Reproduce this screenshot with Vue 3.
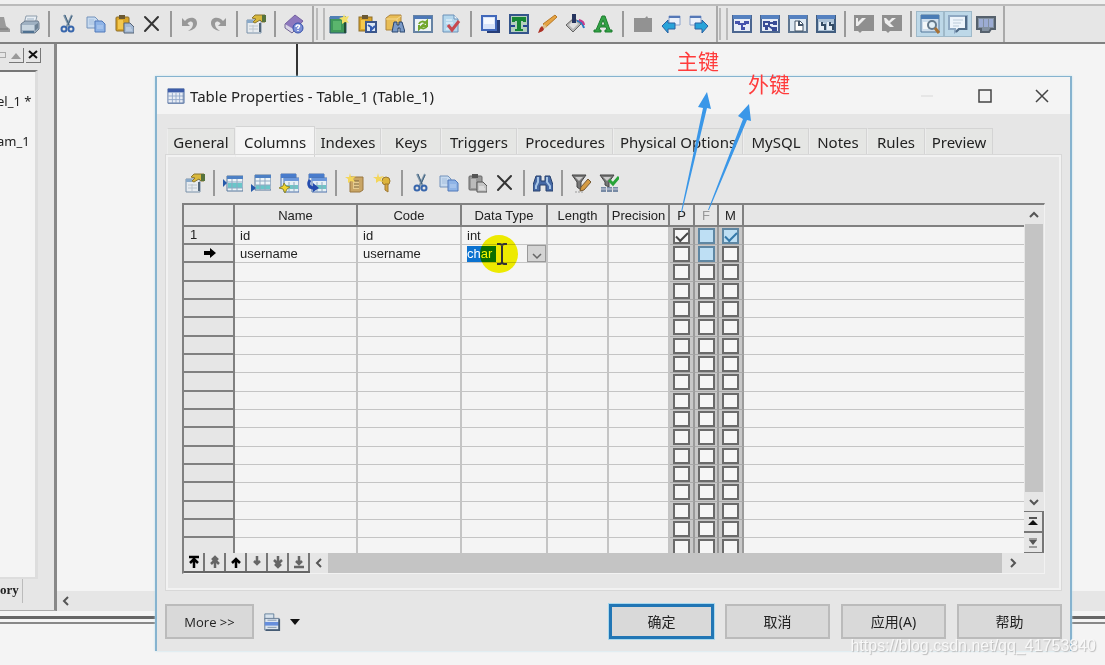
<script setup>
import { ref } from 'vue'

const icons = {
  person: '<path d="M3 3h9l2 9 4 3v3H1V9z" fill="#9a9a9a"/><path d="M4 15h12" stroke="#777"/>',
  printer: '<path d="M6 2h11l-2 8H4z" fill="#e8eef4" stroke="#8e9dab"/><path d="M1 10l4-3h13l1 2v6l-4 4H1z" fill="#9fb1c2" stroke="#6c7d8e"/><path d="M2 11h12v5H2z" fill="#c9d6e0"/><path d="M7 5h7" stroke="#9fb3c5"/><path d="M3 18h11" stroke="#4f7191" stroke-width="2"/><path d="M15 11l3-2v5l-3 3z" fill="#6d8193"/>',
  cut: '<path d="M6 1l6 13M14 1L8 14" stroke="#8298ab" stroke-width="2"/><path d="M7 1l4 10M14 2l-4 9" stroke="#40617f"/><circle cx="6" cy="15" r="2.5" fill="none" stroke="#3866ac" stroke-width="2"/><circle cx="13" cy="15" r="2.5" fill="none" stroke="#3866ac" stroke-width="2"/>',
  copy: '<path d="M1 3h8l3 3v8H1z" fill="#c7daef" stroke="#7593bc"/><path d="M3 6h5M3 8h6M3 10h6" stroke="#a5bedd"/><path d="M9 7h7l3 3v8H9z" fill="#8eb3e6" stroke="#5078b9"/><path d="M11 12h6M11 14h6" stroke="#b9d1f2"/>',
  paste: '<rect x="2" y="3" width="13" height="14" rx="1" fill="#d9a52a" stroke="#8d6d27"/><rect x="5" y="1" width="6" height="4" fill="#6b5933"/><path d="M4 6h5v9H4z" fill="#f3c84e"/><path d="M10 9h6l4 4v6H10z" fill="#a4b9d4" stroke="#576477"/><path d="M12 14h5M12 16h6" stroke="#d0ddec"/>',
  pasteGray: '<rect x="2" y="3" width="13" height="14" rx="1" fill="#999" stroke="#666"/><rect x="5" y="1" width="6" height="4" fill="#555"/><path d="M4 6h5v9H4z" fill="#bbb"/><path d="M10 9h6l4 4v6H10z" fill="#c4c4c4" stroke="#555"/><path d="M12 14h5M12 16h6" stroke="#eee"/>',
  remove: '<path d="M3 3l13 13M16 3L3 17" fill="none" stroke="#353535" stroke-width="2" stroke-linecap="round"/>',
  undo: '<path d="M2 4v8h8L7.500 9.500C10 6.500 13 7 13 10c0 3-2 5-5 7 6-1 9-4 9-8 0-6-8-7-12-2z" fill="#989898"/>',
  redo: '<path d="M18 4v8h-8l2.500-2.500C10 6.500 7 7 7 10c0 3 2 5 5 7-6-1-9-4-9-8 0-6 8-7 12-2z" fill="#989898"/>',
  properties: '<path d="M1 6h14v13H1z" fill="#e7ebef" stroke="#7890a8"/><path d="M1 6h6v3H1z" fill="#89a9c9"/><path d="M3 12h9M3 15h9M7 11v7" stroke="#bcc6cf"/><path d="M6 4l3-3h10v7h-3l-2-2-5 3-2-1 3-3z" fill="#d9b83c" stroke="#8a7730"/><path d="M16 1h4v7h-4z" fill="#56733d"/><path d="M14 9v9" stroke="#54687c" stroke-width="2"/>',
  help: '<path d="M1 10L11 1l8 6-9 10z" fill="#8d78be" stroke="#7562a0"/><path d="M1 10v4l7 5 3-3" fill="#d9d5e6" stroke="#716595"/><circle cx="14" cy="14" r="5" fill="#7b8fd6" stroke="#334eaa"/><path d="M12 13c0-3 5-2 3 0l-1 1v1m0 1v1" fill="none" stroke="#fff" stroke-width="1.5"/>',
  newModel: '<path d="M1 3h16v16H1z" fill="#3f9859" stroke="#315a76"/><path d="M1 2h14v3H1z" fill="#507fb6"/><path d="M4 7h8v9H4z" fill="#5bb56d"/><path d="M16 4v15" stroke="#224d37" stroke-width="2"/><path d="M15 0l1 3 4-1-2 4 2 3-4-1-3 2v-4l-3-2 4-1z" fill="#f2df68"/>',
  pasteModel: '<rect x="2" y="3" width="13" height="14" fill="#d9a52a" stroke="#8d6d27"/><path d="M5 1h6v4H5z" fill="#6b5933"/><path d="M4 6h4v9H4z" fill="#f3c84e"/><rect x="9" y="8" width="10" height="10" fill="#dce7f5" stroke="#3b568b" stroke-width="2"/><path d="M11 11l3 2v3l4-4" fill="none" stroke="#315bb2" stroke-width="2"/>',
  findObject: '<path d="M1 4l4-3h11v10l-4 5H1z" fill="#e8bd56" stroke="#ad833c"/><path d="M1 5h11v11M12 5l4-3" fill="none" stroke="#f4d991"/><path d="M9 8h3v3h2V8h3l3 10h-5v-4h-2v4H7z" fill="#7b9bc8" stroke="#29446d"/>',
  refresh: '<path d="M1 2h18v16H1z" fill="#edf3f6" stroke="#6683a4" stroke-width="2"/><path d="M1 2h18v3H1z" fill="#4d78b7"/><path d="M6 10c1-3 5-3 6-1l2-2v5H9l2-2M14 12c-1 3-5 3-6 1l-2 2v-4" fill="none" stroke="#71a72d" stroke-width="2"/>',
  check: '<path d="M2 1h11l4 4v13H2z" fill="#b4d7ed" stroke="#6b91b8"/><path d="M13 1v4h4" fill="#eef7fd" stroke="#6b91b8"/><path d="M5 6h6M5 9h7M5 15h5" stroke="#f0f8ff"/><path d="M7 11l4 5 7-9" fill="none" stroke="#c74950" stroke-width="3"/>',
  shadow: '<path d="M6 6h13v13H6z" fill="#263e79"/><path d="M1 2h14v14H1z" fill="#d8e4fa" stroke="#4168ba" stroke-width="2"/><path d="M3 4h10v6H3z" fill="#f5f9ff"/>',
  textBox: '<path d="M1 1h18v18H1z" fill="#b4d0bd" stroke="#35558c" stroke-width="2"/><path d="M3 3h14v5h-3V7h-2v8h2v2H6v-2h2V7H6v1H3z" fill="#168635"/><path d="M2 12h4M14 12h4" stroke="#244393" stroke-width="2"/>',
  brush: '<path d="M18 1l2 2-11 10-3-3z" fill="#e6a443" stroke="#b67725"/><path d="M7 10l3 3-3 2-2-2z" fill="#ddc18b"/><path d="M5 12l2 3c-1 3-4 3-6 4l2-5z" fill="#ad3125"/>',
  bucket: '<path d="M1 11L9 4l7 6-8 8z" fill="#b6b6b6" stroke="#656565"/><path d="M4 11l5-5 4 4-5 5z" fill="#e0e0e0"/><path d="M8 9V1h2v8" fill="none" stroke="#26345f" stroke-width="2"/><path d="M12 7c5 0 6 4 7 7" fill="none" stroke="#297ac2" stroke-width="2"/><path d="M14 6c4 1 5 3 5 5" fill="none" stroke="#c6398c" stroke-width="2"/>',
  fontColor: '<path fill-rule="evenodd" d="M9 2h3l5 14h2v2h-7v-2h2l-1-3H7l-1 3h2v2H1v-2h2zM10 6l-2 5h4z" fill="#32a345" stroke="#1f7d30"/>',
  folderGray: '<path d="M1 4h11l2-2 1 2h4v14H1z" fill="#929292"/>',
  back: '<path d="M8 2h11v9H8z" fill="#eaf0fa" stroke="#8aa2cc"/><path d="M8 3h11" stroke="#5578b7" stroke-width="2"/><path d="M1 12l6-6v3h7v6H7v4z" fill="#28a3d9" stroke="#2861a2"/>',
  forward: '<path d="M1 2h11v9H1z" fill="#eaf0fa" stroke="#8aa2cc"/><path d="M1 3h11" stroke="#5578b7" stroke-width="2"/><path d="M19 12l-6-6v3H6v6h7v4z" fill="#28a3d9" stroke="#2861a2"/>',
  diagramA: '<path d="M1 2h18v16H1z" fill="#e7edf7" stroke="#4c6690" stroke-width="2"/><path d="M1 1h18v4H1z" fill="#5581c0"/><path d="M4 8h3v2h3v4h2M10 14v-4h3V8h3" fill="none" stroke="#4553ad" stroke-width="2"/><path d="M3 7h4v3H3zM13 7h4v3h-4zM9 13h4v3H9z" fill="#4553ad"/>',
  diagramB: '<path d="M1 2h18v16H1z" fill="#e7edf7" stroke="#4c6690" stroke-width="2"/><path d="M1 1h18v4H1z" fill="#5581c0"/><path d="M4 8h5v4H4zM9 9h4M9 12l4 3" fill="none" stroke="#394c96" stroke-width="2"/><path d="M13 7h4v4h-4zM12 13h5v4h-5zM5 13h3v3H5z" fill="#394c96"/>',
  diagramC: '<path d="M1 2h18v16H1z" fill="#dce7f1" stroke="#5f7690" stroke-width="2"/><path d="M1 1h18v4H1z" fill="#5581c0"/><path d="M7 7h5l3 3v7H7z" fill="#fff" stroke="#425469"/><path d="M11 7v4h4" fill="none" stroke="#425469" stroke-width="2"/>',
  diagramD: '<path d="M1 2h18v16H1z" fill="#aac0d5" stroke="#425e80" stroke-width="2"/><path d="M1 1h18v4H1z" fill="#5581c0"/><path d="M3 8h3l3 2v6H3zM11 8h3l3 2v6h-6z" fill="#e7eff6"/><path d="M6 8v3h3v5M14 8v3h3v5" fill="none" stroke="#344c65" stroke-width="2"/>',
  grayA: '<path d="M0 1h20v16H8l-2 2-2-2H0z" fill="#8f8f8f"/><path d="M2 4h2v4l4-4h4L4 12H2z" fill="#eee"/>',
  grayB: '<path d="M0 1h20v16H8l-2 2-2-2H0z" fill="#8f8f8f"/><path d="M2 4h2l3 3 3-3h4L8 9l4 4H8L3 9z" fill="#eee"/>',
  preview: '<path d="M1 1h18v17H1z" fill="#cedeec" stroke="#54789b"/><path d="M1 1h18v4H1z" fill="#497cb5"/><path d="M3 8h5v7H3z" fill="#f4f7f9"/><circle cx="12" cy="11" r="4" fill="#e2eef5" stroke="#65798b" stroke-width="2"/><path d="M15 14l4 5" stroke="#a87134" stroke-width="3"/>',
  comment: '<path d="M1 2h18v13h-8l-4 3v-3H1z" fill="#edf4fb" stroke="#8fa9c3" stroke-width="2"/><path d="M5 6h10M5 9h8M5 12h6" stroke="#bccbd9"/><path d="M18 2v13h-7l-3 3" fill="none" stroke="#506b87" stroke-width="2"/>',
  columnsView: '<path d="M1 3h18v12h-4l-2 3H5v-3H1z" fill="#8290a0" stroke="#56616d" stroke-width="2"/><path d="M3 5h4v8H3zM8 5h4v8H8zM13 5h4v8h-4z" fill="#9cacd4"/>',
  table: '<path d="M1 2h18v16H1z" fill="#e8edf5" stroke="#5974a5"/><path d="M1 2h18v4H1z" fill="#3e5ca8"/><path d="M1 10h18M1 14h18M6 6v12M10 6v12M14 6v12" stroke="#92a8cb"/><path d="M18 6v12H1" fill="none" stroke="#657fa8"/>',
  insertRow: '<path d="M4 3h16v15H4z" fill="#edf4f8" stroke="#56769b"/><path d="M4 3h16v3H4z" fill="#4d80c4"/><path d="M5 10h14v5H5z" fill="#69c6c9"/><path d="M4 9h16M4 15h16M9 6v12M14 6v12" stroke="#8fa9c2"/><path d="M0 6l4 4-4 4z" fill="#2459aa"/>',
  addRow: '<path d="M4 2h16v15H4z" fill="#edf4f8" stroke="#56769b"/><path d="M4 2h16v3H4z" fill="#4d80c4"/><path d="M5 12h14v4H5z" fill="#69c6c9"/><path d="M4 8h16M4 12h16M9 5v12M14 5v12" stroke="#8fa9c2"/><path d="M0 11l5 4-5 4z" fill="#2459aa"/>',
  addColumns: '<path d="M2 1h15v14H2z" fill="#dbe7f4" stroke="#4e73ac"/><path d="M2 1h15v4H2z" fill="#497ccc"/><path d="M5 5h15v14H5z" fill="#e7f0f5" stroke="#4e73ac"/><path d="M5 5h15v3H5z" fill="#6b97db"/><path d="M6 12h13v4H6z" fill="#70c4c5"/><path d="M10 9v10M15 9v10" stroke="#8fa9c2"/><path d="M5 10l2 3 4 1-3 2-2 4-2-4-4-1 4-2z" fill="#f1d52e" stroke="#8b8734"/>',
  replaceColumns: '<path d="M2 1h15v14H2z" fill="#dbe7f4" stroke="#4e73ac"/><path d="M2 1h15v4H2z" fill="#497ccc"/><path d="M5 5h15v14H5z" fill="#e7f0f5" stroke="#4e73ac"/><path d="M5 5h15v3H5z" fill="#6b97db"/><path d="M6 12h13v4H6z" fill="#70c4c5"/><path d="M10 9v10M15 9v10" stroke="#8fa9c2"/><path d="M3 7c-3 5 0 8 4 8" fill="none" stroke="#244cae" stroke-width="3"/><path d="M6 10v9l6-4z" fill="#244cae"/>',
  index: '<path d="M5 4h13v13l-3 2H5z" fill="#c9a565" stroke="#997640"/><path d="M8 8h6v8H8z" fill="#e6cb8e"/><path d="M9 8h5M9 11h5M9 14h5" stroke="#7b6238"/><path d="M5 0l1 4 5-1-3 3 2 3-4-1-3 2V6L0 4h4z" fill="#f4d65a"/>',
  key: '<circle cx="13" cy="8" r="4" fill="#ddb43b" stroke="#9b7932"/><path d="M12 11h3v8l-3-2z" fill="#d6a640" stroke="#a07a33"/><path d="M5 0l1 4 5-1-3 3 2 3-4-1-3 2V6L0 4h4z" fill="#f4d65a"/>',
  find: '<path d="M3 3h5v5h4V3h5l3 9v6h-7v-6H7v6H0v-6z" fill="#4669a5" stroke="#27416d"/><path d="M5 4v5l-2 4v3M14 4v5l3 4v3" stroke="#a7c5e6" stroke-width="2" fill="none"/>',
  filter: '<path d="M1 2h14L10 9v8l-4-3V9z" fill="#777" stroke="#444"/><path d="M4 4h8l-4 4z" fill="#ccc"/><path d="M17 6l3 3-7 8-4 1 1-4z" fill="#d59b43" stroke="#745832"/><path d="M4 19h9" stroke="#999" stroke-dasharray="2 1"/>',
  filterCheck: '<path d="M1 2h14L10 9v5l-4-2V9z" fill="#777" stroke="#444"/><path d="M4 4h8l-4 4z" fill="#ccc"/><path d="M10 7l4 4 6-7" fill="none" stroke="#28a438" stroke-width="3"/><path d="M2 14h5v5H2zM8 14h5v5H8zM14 14h5v5h-5z" fill="#778aa4"/><path d="M2 16h17" stroke="#ccd"/>',
  menu: '<path d="M2 1h10v6H2z" fill="#d8e3ed" stroke="#607d99"/><path d="M2 6h16v13H2z" fill="#dce5ef" stroke="#607690"/><path d="M2 10h16v4H2z" fill="#668edc"/><path d="M5 8h10M5 16h10" stroke="#7f92a8"/><path d="M18 7v12H3" fill="none" stroke="#455b74" stroke-width="2"/>',
}

const bandOne = [['person', 'printer'], ['cut', 'copy', 'paste', 'remove'], ['undo', 'redo'], ['properties'], ['help']]
const bandTwo = [['newModel', 'pasteModel', 'findObject', 'refresh', 'check'], ['shadow', 'textBox', 'brush', 'bucket', 'fontColor'], ['folderGray', 'back', 'forward']]
const bandThree = [['diagramA', 'diagramB', 'diagramC', 'diagramD'], ['grayA', 'grayB'], ['preview', 'comment', 'columnsView']]
const gridTools = [['properties'], ['insertRow', 'addRow', 'addColumns', 'replaceColumns'], ['index', 'key'], ['cut', 'copy', 'pasteGray', 'remove'], ['find'], ['filter', 'filterCheck']]
const pressed = ['preview', 'comment']

const tabs = [
  ['General', 'w68'], ['Columns', 'w80'], ['Indexes', 'w66'], ['Keys', 'w60'], ['Triggers', 'w76'], ['Procedures', 'w96'],
  ['Physical Options', 'w130'], ['MySQL', 'w66'], ['Notes', 'w58'], ['Rules', 'w58'], ['Preview', 'w68'],
]
const activeTab = ref('Columns')

const rows = ref(Array.from({ length: 18 }, () => ({ name: '', code: '', type: '', P: false, F: false, M: false })))
Object.assign(rows.value[0], { name: 'id', code: 'id', type: 'int', P: true, M: true })
Object.assign(rows.value[1], { name: 'username', code: 'username', type: 'char' })
const flags = ['P', 'F', 'M']
const isBlue = (index, flag) => (index === 0 && flag !== 'P') || (index === 1 && flag === 'F')

const moves = [
  ['First', 'M3 3h10M8 14V6M4 9l4-4 4 4', true],
  ['Page up', 'M8 14V4M5 6l3-3 3 3M4 10l4-4 4 4', false],
  ['Up', 'M8 14V6M4 9l4-4 4 4', true],
  ['Down', 'M8 2v7M5 7l3 3 3-3', false],
  ['Page down', 'M8 2v10M5 10l3 3 3-3M4 6l4 4 4-4', false],
  ['Last', 'M3 13h10M8 2v7M5 7l3 3 3-3', false],
]
</script>

<template>
  <div class="desktop">
    <header class="bands">
      <div v-for="(band, b) in [bandOne, bandTwo, bandThree]" :key="b" class="band" :class="'band' + b">
        <i v-if="b" class="grip"></i>
        <div v-for="(group, g) in band" :key="g" class="group">
          <button v-for="name in group" :key="name" class="tool" :class="{ pressed: pressed.includes(name) }" :aria-label="name">
            <svg viewBox="0 0 20 20" v-html="icons[name]"></svg>
          </button>
        </div>
      </div>
    </header>

    <main class="workspace">
      <aside class="browser">
        <div class="browser-head">
          <i class="pin"></i>
          <button aria-label="Collapse"><svg viewBox="0 0 14 14"><path d="M2 11h10L7 5z" fill="#999" /></svg></button>
          <button aria-label="Close panel"><svg viewBox="0 0 14 14"><path d="M3 3l8 7M11 3l-8 7" stroke="#111" stroke-width="2" /></svg></button>
        </div>
        <div class="tree">
          <span>el_1 *</span>
          <span>am_1</span>
        </div>
        <div class="browser-tab">ory</div>
      </aside>
      <div class="canvas">
        <div class="page-edge"></div>
        <div class="canvas-scroll">
          <svg viewBox="0 0 12 12"><path d="M8 2L4 6l4 4" fill="none" stroke="#555" stroke-width="2" /></svg>
        </div>
      </div>
    </main>
    <div class="splitter"></div>
    <div class="output"></div>

    <section class="dialog" role="dialog" aria-labelledby="dialog-title">
      <div class="titlebar">
        <svg class="title-icon" viewBox="0 0 20 20" v-html="icons.table"></svg>
        <h1 id="dialog-title">Table Properties - Table_1 (Table_1)</h1>
        <button class="minimize" aria-label="Minimize"><svg viewBox="0 0 14 14"><path d="M1 7h12" stroke="#d8d8d8" /></svg></button>
        <button aria-label="Maximize"><svg viewBox="0 0 14 14"><path d="M1 1h12v12H1z" fill="none" stroke="#444" stroke-width="1.5" /></svg></button>
        <button aria-label="Close"><svg viewBox="0 0 14 14"><path d="M1 1l12 12M13 1L1 13" stroke="#444" stroke-width="1.5" /></svg></button>
      </div>

      <div class="dialog-body">
        <div class="tabs" role="tablist">
          <button v-for="[label, width] in tabs" :key="label" role="tab" class="tab" :class="[width, { active: activeTab === label }]" :aria-selected="activeTab === label" @click="activeTab = label">{{ label }}</button>
        </div>

        <div class="page">
          <div class="grid-tools">
            <div v-for="(group, g) in gridTools" :key="g" class="group">
              <button v-for="name in group" :key="name" class="tool" :aria-label="name">
                <svg viewBox="0 0 20 20" v-html="icons[name]"></svg>
              </button>
            </div>
          </div>

          <div class="grid-frame">
            <div class="grid-top">
              <div class="grid-view">
                <table>
                  <colgroup>
                    <col class="c-head" /><col class="c-name" /><col class="c-code" /><col class="c-type" /><col class="c-num" /><col class="c-num" />
                    <col class="c-flag-wide" /><col class="c-flag" /><col class="c-flag-wide" /><col />
                  </colgroup>
                  <thead>
                    <tr>
                      <th></th><th>Name</th><th>Code</th><th>Data Type</th><th>Length</th><th>Precision</th>
                      <th>P</th><th class="dim">F</th><th>M</th><th></th>
                    </tr>
                  </thead>
                  <tbody>
                    <tr v-for="(row, r) in rows" :key="r">
                      <th scope="row">
                        <template v-if="r === 0">1</template>
                        <svg v-if="r === 1" class="row-arrow" viewBox="0 0 12 10"><path d="M0 3h6V0l6 5-6 5V7H0z" /></svg>
                      </th>
                      <td>{{ row.name }}</td>
                      <td>{{ row.code }}</td>
                      <td>
                        <div v-if="r === 1" class="editor">
                          <input v-model="row.type" aria-label="Data type" />
                          <button aria-label="Choose data type"><svg viewBox="0 0 14 14"><path d="M3 7l4 4 4-4" fill="none" stroke="#666" stroke-width="1.5" /></svg></button>
                          <svg class="pointer" viewBox="0 0 40 40">
                            <circle cx="20" cy="20" r="19" fill="#f8f500" />
                          </svg>
                          <svg class="caret" viewBox="0 0 12 22"><path d="M1 1h3l2 1 2-1h3M1 21h3l2-1 2 1h3M6 2v18" fill="none" stroke="#333" stroke-width="2" /></svg>
                        </div>
                        <template v-else>{{ row.type }}</template>
                      </td>
                      <td></td>
                      <td></td>
                      <td v-for="flag in flags" :key="flag" class="flag">
                        <input v-model="row[flag]" type="checkbox" :class="{ blue: isBlue(r, flag) }" :aria-label="flag + ' row ' + (r + 1)" />
                      </td>
                      <td></td>
                    </tr>
                  </tbody>
                </table>
              </div>
              <div class="vscroll">
                <button aria-label="Scroll up"><svg viewBox="0 0 12 12"><path d="M2 8l4-4 4 4" fill="none" stroke="#555" stroke-width="2" /></svg></button>
                <div class="vthumb"></div>
                <button aria-label="Scroll down"><svg viewBox="0 0 12 12"><path d="M2 4l4 4 4-4" fill="none" stroke="#555" stroke-width="2" /></svg></button>
                <button class="raised" aria-label="To top"><svg viewBox="0 0 12 12"><path d="M2 2h8" stroke="#222" stroke-width="1.5" /><path d="M1 9h10L6 4z" fill="#111" /></svg></button>
                <button class="raised" aria-label="To bottom"><svg viewBox="0 0 12 12"><path d="M2 10h8M2 2h8" stroke="#555" /><path d="M2 3h8L6 8z" fill="#555" /></svg></button>
              </div>
            </div>
            <div class="grid-bottom">
              <div class="moves">
                <button v-for="[label, d, dark] in moves" :key="label" :aria-label="label">
                  <svg viewBox="0 0 16 16"><path :d="d" fill="none" :stroke="dark ? '#000' : '#666'" stroke-width="2.5" /></svg>
                </button>
              </div>
              <button class="hend" aria-label="Scroll left"><svg viewBox="0 0 12 12"><path d="M8 2L4 6l4 4" fill="none" stroke="#555" stroke-width="2" /></svg></button>
              <div class="hthumb"></div>
              <button class="hend hright" aria-label="Scroll right"><svg viewBox="0 0 12 12"><path d="M4 2l4 4-4 4" fill="none" stroke="#555" stroke-width="2" /></svg></button>
            </div>
          </div>
        </div>

        <footer class="actions">
          <button class="push more">More &gt;&gt;</button>
          <button class="menu" aria-label="Menu">
            <svg class="menu-icon" viewBox="0 0 20 20" v-html="icons.menu"></svg>
            <svg class="menu-arrow" viewBox="0 0 10 6"><path d="M0 0h10L5 6z" fill="#111" /></svg>
          </button>
          <span class="spacer"></span>
          <button class="push primary">确定</button>
          <button class="push">取消</button>
          <button class="push">应用(A)</button>
          <button class="push">帮助</button>
        </footer>
      </div>
    </section>

    <div class="note note-primary">主键</div>
    <div class="note note-foreign">外键</div>
    <svg class="arrows" viewBox="0 0 80 126">
      <path d="M7 121L29 17l-5-1L33 1l4 17-4-1L8 121zM34 119L69 28l-5-3L75 13l2 17-4-1L35 119z" fill="#3a97e8" />
    </svg>
    <div class="watermark">https://blog.csdn.net/qq_41753840</div>
  </div>
</template>

<style>
body { margin: 0; }
</style>

<style scoped>
.desktop, .desktop * { box-sizing: border-box; }
.desktop {
  position: relative; display: flex; flex-direction: column; min-height: 100vh; overflow: hidden;
  background: #f4f4f4; color: #222; font-family: "Noto Sans", "Noto Sans CJK SC", sans-serif;
}
button { margin: 0; padding: 0; border: 0; background: none; color: inherit; font: inherit; }
svg { display: block; flex: none; }

.bands { display: flex; height: 44px; padding-top: 2px; background: #e6e6e6; border-top: 4px solid #f0f0f0; border-bottom: 2px solid #808080; box-shadow: inset 0 2px #bbb; }
.band { display: flex; align-items: center; border-right: 2px solid #aaa; }
.band0 { padding-right: 4px; margin-left: -12px; }
.band1 { padding-right: 3px; }
.band2 { padding-right: 3px; }
.grip { width: 9px; height: 32px; margin-left: 2px; border: solid #bbb; border-width: 0 2px; }
.band2 .grip { margin-left: 1px; }
.group { display: flex; align-items: center; }
.group + .group::before { content: ""; width: 2px; height: 26px; margin: 0 4px; background: #999; }
.band1 .group + .group::before { margin: 0 5px; }
.tool { display: grid; place-items: center; width: 28px; height: 26px; }
.tool svg { width: 20px; height: 20px; }
.tool.pressed { background: #bdd8e8; border: 1px solid #9fb9c9; }

.workspace { display: flex; flex: 1; }
.browser { display: flex; flex-direction: column; width: 57px; padding-top: 1px; background: #e6e6e6; border-right: 3px solid #888; border-bottom: 1px solid #aaa; }
.browser-head { display: flex; align-items: center; gap: 2px; height: 20px; }
.browser-head button { width: 15px; height: 15px; border: solid #777; border-width: 0 1px 1px 0; }
.browser-head button svg { width: 14px; height: 14px; }
.pin { width: 6px; height: 6px; margin-right: 1px; border: 1px solid #aaa; border-left: 0; }
.tree { display: flex; flex: 1; flex-direction: column; gap: 22px; align-items: flex-start; width: 38px; margin-top: 5px; padding-top: 20px; border-top: 2px solid #777; border-right: 3px solid #ddd; border-bottom: 2px solid #ddd; background: #f4f4f4; font-size: 13px; line-height: 18px; white-space: nowrap; }
.tree span { margin-left: -3px; }
.browser-tab { width: 23px; height: 24px; margin-bottom: 7px; border-right: 1px solid #bbb; font: bold 13px/22px "Liberation Serif", serif; }
.canvas { display: flex; flex: 1; flex-direction: column; }
.page-edge { width: 241px; flex: 1; border-right: 2px solid #333; }
.canvas-scroll { display: flex; align-items: center; height: 20px; padding-left: 3px; background: #e6e6e6; }
.canvas-scroll svg { width: 12px; height: 12px; }
.splitter { height: 14px; margin-top: 5px; border-top: 3px solid #666; }
.splitter::after { content: ""; display: block; height: 2px; margin-top: 3px; background: #888; }
.output { height: 35px; }

.dialog { position: absolute; top: 76px; left: 155px; right: 33px; border: solid #86b3cf; border-width: 1px 2px 0; background: #e6e6e6; box-shadow: 0 0 2px #bfe3ef; }
.titlebar { display: flex; align-items: center; height: 37px; padding-left: 10px; background: #f4f4f4; }
.title-icon { width: 18px; height: 18px; margin-right: 5px; }
h1 { flex: 1; margin: 0; font-size: 15px; font-weight: 400; line-height: 20px; }
.titlebar button { display: grid; place-items: center; width: 58px; height: 36px; }
.titlebar button svg { width: 14px; height: 14px; }
.titlebar button:last-child { width: 56px; }

.dialog-body { padding: 12px 9px 12px 9px; }
.tabs { display: flex; align-items: flex-end; height: 29px; padding-left: 1px; }
.tab { height: 27px; border: 1px solid #d4d4d4; border-bottom: 0; border-left-color: #ededed; background: #e5e6e4; font-size: 15px; line-height: 24px; white-space: nowrap; }
.tab.active { height: 31px; margin-bottom: -2px; background: #f4f4f4; line-height: 26px; }
.w58 { width: 58px; } .w60 { width: 60px; } .w66 { width: 66px; } .w68 { width: 68px; } .w76 { width: 76px; }
.w80 { width: 80px; } .w96 { width: 96px; } .w130 { width: 130px; }

.page { padding: 13px 14px 14px 14px; border: 2px solid #f2f2f2; outline: 1px solid #d8d8d8; }
.grid-tools { display: flex; height: 33px; align-items: flex-start; margin-left: -1px; }
.grid-frame { border-top: 2px solid #808080; border-left: 2px solid #808080; background: #e6e6e6; border-right: 1px solid #f2f2f2; border-bottom: 1px solid #f2f2f2; }
.grid-top { display: flex; height: 348px; }
.grid-view { flex: 1; overflow: hidden; background: #f4f4f4; }
table { width: 100%; table-layout: fixed; border-collapse: separate; border-spacing: 0; font: 13px/16px "Liberation Sans", sans-serif; }
.c-head { width: 51px; } .c-name { width: 123px; } .c-code { width: 104px; } .c-type { width: 86px; }
.c-num { width: 61px; } .c-flag { width: 24px; } .c-flag-wide { width: 25px; }
th, td { padding: 0; border: solid #c4c4c4; border-width: 0 2px 1px 0; white-space: nowrap; }
thead th { height: 22px; padding-top: 2px; border-color: #808080; border-bottom-width: 2px; background: #e6e6e6; font-weight: 400; }
thead th:last-child, td:last-child { border-right: 0; }
thead .dim { color: #999; }
tbody th { padding-left: 6px; border-color: #808080; border-bottom-width: 2px; background: #e6e6e6; font-weight: 400; text-align: left; }
tbody td { height: 18px; padding-left: 5px; line-height: 17px; }
tbody tr:nth-child(3n) td { height: 19px; }
tbody td:nth-child(4) { padding-left: 5px; }
.row-arrow { width: 12px; height: 10px; margin-left: 14px; }
tbody td.flag { padding: 0; border-color: #9a9a9a; border-bottom-color: #aaa; background: #c8c8c8; }
.flag input { appearance: none; display: block; width: 17px; height: 16px; margin: 0 auto; border: 2px solid #6a6a6a; background: #f6f6f6; }
.flag input:checked::before { content: ""; display: block; width: 10px; height: 5px; margin: 2px 1px; border: solid #444; border-width: 0 0 2px 2px; transform: rotate(-45deg); }
.flag input.blue { border-color: #5f87a3; background: #bedff4; }
.flag input.blue:checked::before { border-color: #3479aa; }
.editor { position: relative; display: flex; align-items: center; justify-content: space-between; height: 17px; }
.editor input { width: 29px; height: 16px; padding: 0; border: 0; background: #0b72d0; color: #fff; font: inherit; }
.editor button { width: 19px; height: 17px; border: 1px solid #999; background: #d4d4d4; }
.editor button svg { width: 14px; height: 14px; margin: 0 auto; }
.pointer { position: absolute; left: 12px; top: -11px; width: 40px; height: 40px; mix-blend-mode: multiply; }
.caret { position: absolute; left: 29px; top: -2px; width: 12px; height: 22px; }

.vscroll { display: flex; flex-direction: column; width: 20px; }
.vscroll button { display: grid; place-items: center; height: 19px; }
.vscroll svg { width: 12px; height: 12px; }
.vthumb { flex: 1; margin: 0 1px; background: #c4c4c4; }
.vscroll .raised { height: 21px; border: solid #777; border-width: 1px 2px 1px 0; }
.grid-bottom { display: flex; height: 20px; padding-right: 20px; }
.moves { display: flex; border-bottom: 2px solid #666; }
.moves button { display: grid; place-items: center; width: 21px; border-right: 2px solid #777; }
.moves svg { width: 16px; height: 16px; }
.hend { display: grid; place-items: center; width: 18px; }
.hend svg { width: 12px; height: 12px; }
.hright { width: 22px; }
.hthumb { flex: 1; background: #c4c4c4; }

.actions { display: flex; gap: 11px; padding-top: 14px; margin: 0 -1px; }
.push { width: 105px; height: 35px; border: 2px solid #bbb; background: #d9d9d9; font-size: 14px; line-height: 20px; }
.push.more { width: 89px; font-family: "Open Sans", sans-serif; font-size: 13px; }
.push.primary { border: 3px solid #2176b5; outline: 1px solid #a8d8ee; }
.menu { display: flex; align-items: center; gap: 9px; margin-left: -2px; }
.menu-icon { width: 18px; height: 20px; }
.menu-arrow { width: 10px; height: 6px; }
.spacer { flex: 1; }

.note { position: absolute; color: #ff3b3b; font: 21px/24px "Noto Sans CJK SC", sans-serif; white-space: nowrap; }
.note-primary { top: 48px; left: 677px; }
.note-foreign { top: 71px; left: 748px; }
.arrows { position: absolute; top: 91px; left: 674px; width: 80px; height: 126px; pointer-events: none; }
.watermark { position: absolute; right: 9px; bottom: 9px; color: #f8f8f8; font: 16px/20px "Liberation Sans", sans-serif; text-shadow: 1px 1px 1px #bbb; }
</style>
